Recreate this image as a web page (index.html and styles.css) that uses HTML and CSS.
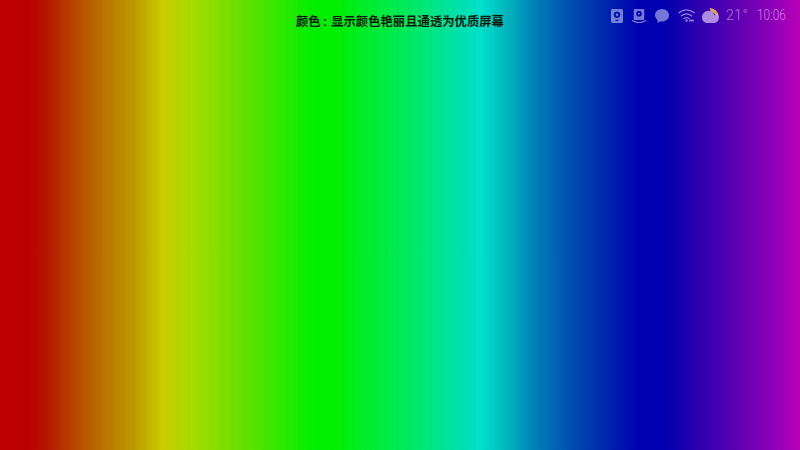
FILE: index.html
```html
<!DOCTYPE html>
<html lang="zh">
<head>
<meta charset="utf-8">
<title>颜色</title>
<link rel="stylesheet" href="styles.css">
</head>
<body>
<header class="top">
  <div></div>
  <h1 class="title">颜色<span class="colon">:</span>显示颜色艳丽且通透为优质屏幕</h1>
  <div class="status">
    <svg class="ic ic-disk" viewBox="0 0 12 14"><path fill-rule="evenodd" d="M1.500 0h9A1.500 1.500 0 0 1 12 1.500v11a1.500 1.500 0 0 1-1.500 1.500h-9A1.500 1.500 0 0 1 0 12.500v-11A1.500 1.500 0 0 1 1.500 0zM6 2.500a3.300 3.300 0 1 0 0 6.600a3.300 3.300 0 0 0 0-6.600zM6 4.600a1.200 1.200 0 1 1 0 2.400a1.200 1.200 0 0 1 0-2.400zM4.500 10.700v1.300h3v-1.300z"/></svg>
    <svg class="ic ic-cast" viewBox="0 0 14 14"><path fill-rule="evenodd" d="M3 0h8a1.300 1.300 0 0 1 1.300 1.300v8.400A1.300 1.300 0 0 1 11 11H3a1.300 1.300 0 0 1-1.300-1.300V1.300A1.300 1.300 0 0 1 3 0zM7 2a2.800 2.800 0 1 0 0 5.600a2.800 2.800 0 0 0 0-5.600zM7 3.800a1 1 0 1 1 0 2a1 1 0 0 1 0-2z"/><path class="ln" d="M.6 11.800q6.400 3.500 12.800 0"/></svg>
    <svg class="ic ic-chat" viewBox="0 0 14 14"><path d="M7 0c3.900 0 7 2.800 7 6.300s-3.100 6.300-7 6.300c-.6 0-1.200-.1-1.800-.2L2.400 14l.2-3.100C1 9.800 0 8.200 0 6.300 0 2.800 3.100 0 7 0z"/></svg>
    <svg class="ic ic-wifi" viewBox="0 0 17 13"><path class="ln" d="M.8 3.800q7.700-5.800 15.400 0M3.400 6.800q5.100-3.800 10.200 0M6 9.500q2.500-1.700 5 0"/><circle cx="8.500" cy="11.500" r="1.300"/><rect x="11" y="10.600" width="5" height="1.800" rx=".6"/></svg>
    <svg class="ic ic-cloud" viewBox="0 0 17 15"><path class="sun" d="M7.500 0.300C11.500 0 15 2.300 16.500 6.800L15.200 7.600 8.800 3.200z"/><path class="cloud" d="M6.500 2.800c3 0 5 1.800 5.600 4.200.7-.5 1.400-.7 2-.7 1.600 0 2.900 1.300 2.900 3 0 3-2 5.700-5 5.700H5.300C2.300 15 0 12.600 0 9.500 0 5.800 2.900 2.800 6.500 2.800z"/></svg>
    <span class="temp">21°</span>
    <span class="clock">10:06</span>
  </div>
</header>
</body>
</html>
```
FILE: styles.css
```css
html, body { margin: 0; height: 100%; }
body {
  width: 800px;
  height: 450px;
  overflow: hidden;
  background:
    repeating-linear-gradient(90deg, rgba(0,0,0,.012) 0 4px, rgba(0,0,0,0) 4px 11px),
    linear-gradient(90deg,
    #bc0000 0, #bc0000 28px, #b41400 45px, #b84800 75px, #bc7400 105px,
    #bc9c00 135px, #cccc00 163px, #a8dc00 190px, #70e000 235px,
    #30ea00 280px, #00f000 315px, #00f000 335px, #00ee30 370px, #00ea60 410px,
    #00e2a0 450px, #00e0cc 482px, #00b0bc 510px, #0080b8 535px,
    #0050b0 570px, #0020b0 610px, #0000b0 640px, #0000b0 665px,
    #3000b0 700px, #6000b4 740px, #9000b8 775px, #b800b8 800px);
  font-family: "Liberation Sans", "Noto Sans CJK SC", sans-serif;
}
.top {
  display: grid;
  grid-template-columns: 1fr auto 1fr;
  align-items: start;
}
.title {
  margin: 0;
  padding-top: 14px;
  font-size: 12.350px;
  line-height: 17px;
  font-weight: 700;
  color: #0a1a0a;
  white-space: nowrap;
}
.colon { margin: 0 4px 0 2.300px; }
.status {
  display: flex;
  align-items: flex-start;
  justify-content: flex-end;
  gap: 9px;
  padding: 8px 14px 0 0;
  font-family: Roboto, "Liberation Sans", sans-serif;
  font-weight: 300;
  font-size: 14px;
  line-height: 15px;
}
.ic { display: block; height: 14px; fill: rgba(235,235,255,.5); flex: none; }
.ic-disk { width: 12px; margin-top: 1px; }
.ic-cast { width: 14px; margin-top: 1px; }
.ic-chat { width: 14px; margin-top: 1px; }
.ic-wifi { width: 17px; height: 13px; margin-top: 1px; }
.ic-cloud { width: 17px; height: 15px; margin: 0 0 0 -2px; }
.ln { fill: none; stroke: rgba(235,235,255,.55); stroke-width: 1.300; stroke-linecap: round; }
.sun { fill: #d8a858; }
.cloud { fill: rgba(240,225,255,.62); }
.temp { margin-left: -2px; width: 17px; color: rgba(255,235,255,.5); letter-spacing: .5px; white-space: nowrap; }
.clock { margin-left: 5px; width: 29px; color: rgba(255,235,255,.55); white-space: nowrap; display: inline-block; transform: scaleX(.85); transform-origin: left; }
```
